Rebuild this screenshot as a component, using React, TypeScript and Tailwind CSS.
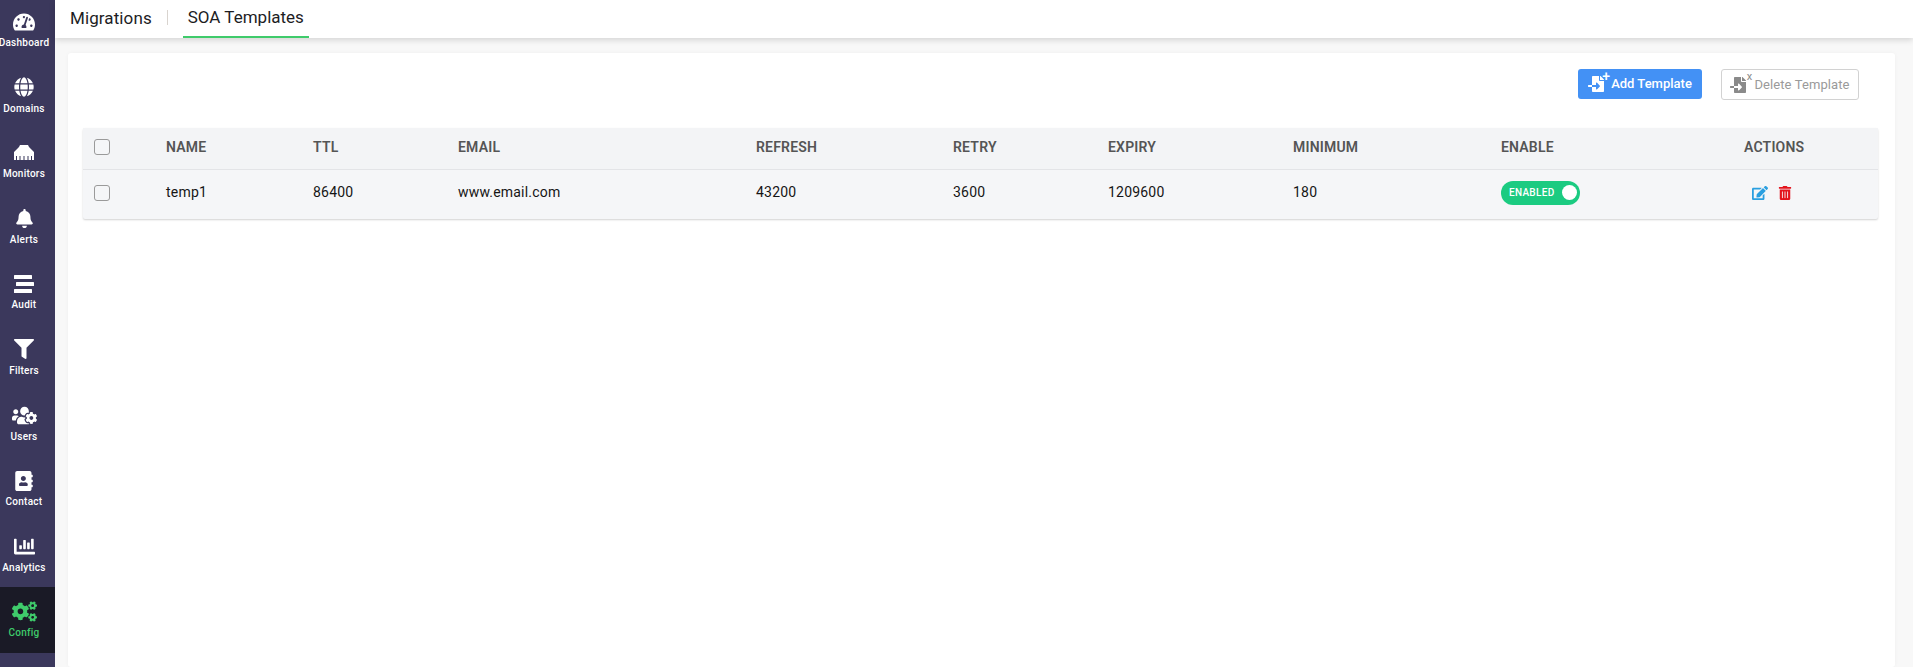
import { FaTachometerAlt, FaGlobe, FaBell, FaFilter, FaUsersCog, FaAddressBook, FaChartBar, FaCogs, FaEdit, FaTrashAlt, FaFileImport } from 'react-icons/fa';
import type { ReactNode } from 'react';

function MonitorIcon() {
  return (
    <svg viewBox="0 0 20 15" className="w-[20px] h-[15px]" fill="currentColor">
      <path d="M6 0h8l1 2 5 5v8h-2v-4h-1v4h-2.5v-4h-1v4h-3v-4h-1v4H6.500v-4h-1v4H3v-4H2v4H0V7l5-5z" />
    </svg>
  );
}

function AuditIcon() {
  return (
    <svg viewBox="0 0 20 18" className="w-[20px] h-[18px]" fill="currentColor">
      <rect x="0" y="0" width="18" height="4" rx="0.5" />
      <rect x="2" y="7" width="18" height="4" rx="0.5" />
      <rect x="0" y="14" width="18" height="4" rx="0.5" />
    </svg>
  );
}

const navItems: { label: string; icon: ReactNode; active?: boolean }[] = [
  { label: 'Dashboard', icon: <FaTachometerAlt size={22} /> },
  { label: 'Domains', icon: <FaGlobe size={20} /> },
  { label: 'Monitors', icon: <MonitorIcon /> },
  { label: 'Alerts', icon: <FaBell size={19} /> },
  { label: 'Audit', icon: <AuditIcon /> },
  { label: 'Filters', icon: <FaFilter size={20} /> },
  { label: 'Users', icon: <FaUsersCog size={25} /> },
  { label: 'Contact', icon: <FaAddressBook size={20} /> },
  { label: 'Analytics', icon: <FaChartBar size={21} /> },
  { label: 'Config', icon: <FaCogs size={25} />, active: true },
];

const columns = ['NAME', 'TTL', 'EMAIL', 'REFRESH', 'RETRY', 'EXPIRY', 'MINIMUM', 'ENABLE', 'ACTIONS'];
const row = ['temp1', '86400', 'www.email.com', '43200', '3600', '1209600', '180'];
const gridCols = 'grid grid-cols-[83px_147px_145px_298px_197px_155px_185px_208px_243px_1fr] items-center';

function Checkbox() {
  return <span className="ml-[11px] block w-4 h-4 rounded-[3px] border border-[#9a9a9a] bg-[#f5f6f8]" />;
}

export default function App() {
  return (
    <div className="flex h-[667px] overflow-hidden bg-[#f8f8f8] font-['Roboto',sans-serif]">
      {/* Sidebar */}
      <aside className="w-[55px] shrink-0 bg-[#3b385c] text-white overflow-hidden">
        <div className="-mt-[3px]">
          {navItems.map((item) => (
            <div
              key={item.label}
              className={`h-[65.6px] flex flex-col items-center pt-[12px] pr-[7px] ${item.active ? 'bg-[#1a1a26] text-[#3fcb6b]' : ''}`}
            >
              <div className="h-[25px] flex items-center justify-center">{item.icon}</div>
              <span className="mt-[2px] text-[10px] leading-[13px] whitespace-nowrap font-medium tracking-[0.25px]">
                {item.label}
              </span>
            </div>
          ))}
        </div>
      </aside>

      <div className="flex-1 min-w-0 flex flex-col">
        {/* Tabs */}
        <div className="h-[38px] bg-white shadow-[0_2px_6px_rgba(0,0,0,0.15)] flex items-stretch text-[17px] text-[#1d1d1f]">
          <div className="pl-[15px] pr-[15px] flex items-center tracking-[0.1px]">Migrations</div>
          <div className="w-px h-[15px] mt-[10px] bg-[#d9d4cf]" />
          <div className="ml-[15px] px-[5px] flex items-center border-b-2 border-[#3fcb6b]">SOA Templates</div>
        </div>

        {/* Card */}
        <div className="mt-[15px] ml-[13px] mr-[18px] flex-1 bg-white rounded-[3px] shadow-[0_0_4px_rgba(0,0,0,0.04)] pt-[16px] pl-[15px] pr-[17px]">
          <div className="flex justify-end items-start pr-[19px]">
            <button className="h-[30px] w-[124px] rounded-[3px] bg-[#4391f5] text-white text-[13px] font-medium flex items-center justify-center">
              <span className="relative flex">
                <FaFileImport size={16} />
                <span className="absolute -right-[6px] -top-[7px] text-[14px] leading-none">+</span>
              </span>
              <span className="ml-[7px]">Add Template</span>
            </button>
            <button className="ml-[19px] h-[31px] w-[138px] rounded-[3px] border border-[#d2d2d2] bg-white text-[#9a9a9a] text-[13px] tracking-[0.1px] flex items-center justify-center">
              <span className="relative flex text-[#8a8a8a]">
                <FaFileImport size={16} />
                <span className="absolute -right-[6px] -top-[6px] text-[11px] leading-none">x</span>
              </span>
              <span className="ml-[8px]">Delete Template</span>
            </button>
          </div>

          {/* Table */}
          <div className="mt-[28px] rounded-[2px] bg-[#f5f6f8] shadow-[0_1px_2px_rgba(0,0,0,0.18)]">
            <div className={`${gridCols} h-[42px] pb-[3px] bg-[#f3f4f6] border-b border-[#e3e4e7] text-[14px] font-semibold tracking-[0.2px] text-[#555]`}>
              <Checkbox />
              {columns.map((c) => (
                <span key={c}>{c}</span>
              ))}
            </div>
            <div className={`${gridCols} h-[49px] pb-[4px] text-[14px] tracking-[0.2px] text-[#151515]`}>
              <Checkbox />
              {row.map((v) => (
                <span key={v}>{v}</span>
              ))}
              <span className="w-[79px] h-[24px] rounded-full bg-[#1bcb81] text-white flex items-center justify-between pl-[8px] pr-[3px] text-[10px] font-medium tracking-[0.3px]">
                ENABLED
                <span className="w-[15px] h-[15px] rounded-full bg-white" />
              </span>
              <span className="flex items-center gap-[10px] pl-[8px]">
                <FaEdit size={16} className="text-[#2a9fe0]" />
                <FaTrashAlt size={14} className="text-[#e3131c]" />
              </span>
            </div>
          </div>
        </div>
      </div>
    </div>
  );
}
